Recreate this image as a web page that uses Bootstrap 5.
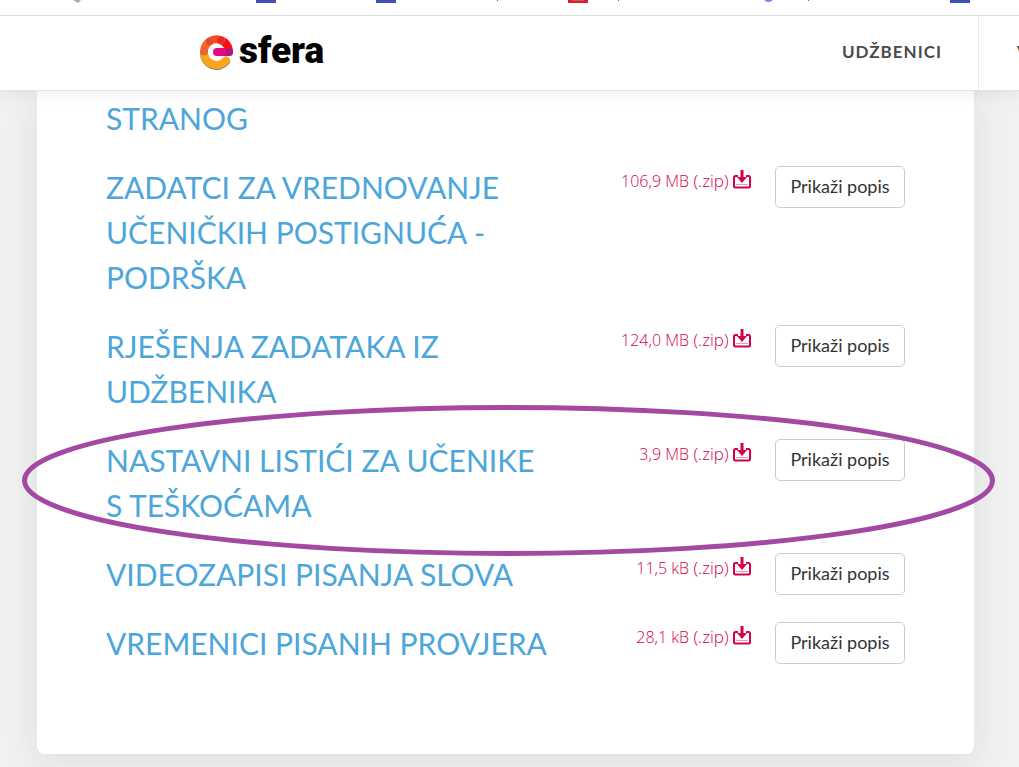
<!DOCTYPE html>
<html lang="hr">
<head>
<meta charset="utf-8">
<meta name="viewport" content="width=device-width, initial-scale=1">
<title>e-sfera</title>
<link href="https://cdn.jsdelivr.net/npm/bootstrap@5.3.0/dist/css/bootstrap.min.css" rel="stylesheet">
<style>
body { background: #f1f1f1; font-family: Lato, "Open Sans", sans-serif; overflow-x: hidden; }
.bookmarks { height: 16px; background: #fff; border-bottom: 1px solid #dadcdd; z-index: 3; }
.bookmarks svg { display: block; }
.site-header { height: 75px; background: #fff; border-bottom: 1px solid #e4e4e4; box-shadow: 0 2px 16px rgba(0,0,0,.08); z-index: 2; }
.brand { margin-left: 199px; padding-bottom: 2px; color: #000; font: 900 37px/40px Roboto, sans-serif; }
.brand:hover { color: #000; }
.brand span { padding-bottom: 2px; }
.main-nav { overflow: hidden; width: 215px; }
.main-nav a { font-size: 17px; font-weight: 700; letter-spacing: 1px; color: #4a4a4a; padding: 0 36px 2px 38px; }
.main-nav li + li { border-left: 1px solid #ebebeb; }
.main-nav li + li a { padding-left: 38px; }
.sheet { margin: 0 45px 13px 37px; padding: 5px 69px 88px; background: #fff; border-radius: 0 0 8px 8px; box-shadow: 0 8px 36px rgba(20,30,45,.09); }
.materials { gap: 24px; }
.material-title { font-size: 30px; line-height: 45px; font-weight: 400; color: #4ca6da; }
.download { color: #d50045; font: 300 17px/24px "Open Sans", sans-serif; margin-top: 4px; }
.download:hover { color: #a80036; }
.download svg { vertical-align: -2px; }
.file-size { font-size: 16px; }
.btn-list { width: 130px; height: 42px; margin-top: 1px; border: 1px solid #ccc; border-radius: 5px; background: #fff; color: #333; font-size: 18px; line-height: 24px; padding: 0 0 2px; }
.highlight { left: -84px; top: -33px; width: calc(100% + 174px); max-width: none; height: 151px; overflow: visible; pointer-events: none; }
</style>
</head>
<body>
<div class="bookmarks overflow-hidden position-relative" aria-hidden="true">
  <svg width="1019" height="15">
    <path d="M73 0h8l-3 3z" fill="#aaa"/>
    <path d="M256 0h20v3h-20zM376 0h20v3h-20zM950 0h20v3h-20z" fill="#4250b5"/>
    <path d="M568 0h20v3h-20z" fill="#d81e30"/><path d="M572 0h12v1h-12z" fill="#c45a60"/>
    <path d="M764 0h9l-3 2h-3z" fill="#8486ed"/>
    <path d="M497 0h1v1h-1zM618 0h1v1h-1zM808 0h1v1h-1z" fill="#85614d"/>
  </svg>
</div>
<header class="site-header d-flex align-items-center justify-content-between position-relative">
  <a class="brand d-flex align-items-center text-decoration-none" href="#">
    <svg width="36" height="36" viewBox="0 0 36 36" class="me-1" aria-hidden="true">
      <g fill="none" stroke-width="8" stroke-linecap="round">
        <path d="M5 18A12.500 12.500 0 0 0 27 26.500" stroke="#8f7a5c" transform="translate(0 1)"/>
        <path d="M5 18A12.500 12.500 0 0 0 27 26.500" stroke="#faa61d"/>
        <path d="M22.500 6.500A12.500 12.500 0 0 1 29.800 15.500" stroke="#fd1014"/>
        <path d="M10.500 7.500A12.500 12.500 0 0 1 22 6.300" stroke="#fb4827"/>
        <path d="M5 17.500A12.500 12.500 0 0 1 10.500 7.500" stroke="#fb632d"/>
      </g>
      <circle cx="10.500" cy="7.500" r="3.600" fill="#dc4a30"/><circle cx="22" cy="6.300" r="3.600" fill="#e42c24"/><circle cx="5" cy="17.500" r="3.600" fill="#df6932"/>
      <rect x="14" y="14" width="20" height="8" rx="4" fill="#e5087e"/><path d="M27 14h3a4 4 0 0 1 0 8h-3z" fill="#b61576"/>
    </svg>
    <span>sfera</span>
  </a>
  <nav class="main-nav align-self-stretch">
    <ul class="list-unstyled d-flex h-100 m-0">
      <li class="d-flex align-items-center"><a class="text-decoration-none" href="#">UDŽBENICI</a></li>
      <li class="d-flex align-items-center"><a class="text-decoration-none" href="#">V</a></li>
    </ul>
  </nav>
</header>
<svg class="d-none" aria-hidden="true">
  <symbol id="dl" viewBox="0 0 18 19">
    <path d="M5 6H2.500Q1 6 1 7.500V16Q1 17.500 2.500 17.500H15.500Q17 17.500 17 16V7.500Q17 6 15.500 6H13" fill="none" stroke="currentColor" stroke-width="2"/>
    <path d="M7.500 0h3v7h3.500L9 13 4 7h3.500z" fill="currentColor"/><path d="M3 14.500h12" stroke="currentColor" stroke-opacity=".4"/>
  </symbol>
</svg>
<main class="sheet">
  <div class="materials d-flex flex-column">
    <div class="row g-0">
      <h2 class="material-title col-7 m-0 pe-2">STRANOG</h2>
    </div>
    <div class="row g-0">
      <h2 class="material-title col-7 m-0 pe-2">ZADATCI ZA VREDNOVANJE UČENIČKIH POSTIGNUĆA - PODRŠKA</h2>
      <div class="col-5 d-flex justify-content-end align-items-start gap-4">
        <a class="download text-decoration-none text-nowrap" href="#"><span class="file-size">106,9 MB</span> (.zip) <svg width="18" height="19"><use href="#dl"/></svg></a>
        <button class="btn btn-list" type="button">Prikaži popis</button>
      </div>
    </div>
    <div class="row g-0">
      <h2 class="material-title col-7 m-0 pe-2">RJEŠENJA ZADATAKA IZ UDŽBENIKA</h2>
      <div class="col-5 d-flex justify-content-end align-items-start gap-4">
        <a class="download text-decoration-none text-nowrap" href="#"><span class="file-size">124,0 MB</span> (.zip) <svg width="18" height="19"><use href="#dl"/></svg></a>
        <button class="btn btn-list" type="button">Prikaži popis</button>
      </div>
    </div>
    <div class="row g-0 position-relative">
      <h2 class="material-title col-7 m-0 pe-2">NASTAVNI LISTIĆI ZA UČENIKE S&nbsp;TEŠKOĆAMA</h2>
      <div class="col-5 d-flex justify-content-end align-items-start gap-4">
        <a class="download text-decoration-none text-nowrap" href="#"><span class="file-size">3,9 MB</span> (.zip) <svg width="18" height="19"><use href="#dl"/></svg></a>
        <button class="btn btn-list" type="button">Prikaži popis</button>
      </div>
      <svg class="highlight position-absolute p-0 m-0" viewBox="0 0 973 151" preserveAspectRatio="none" aria-hidden="true"><ellipse cx="486.500" cy="75.500" rx="484" ry="73" fill="none" stroke="#a349a4" stroke-width="5" vector-effect="non-scaling-stroke"/></svg>
    </div>
    <div class="row g-0">
      <h2 class="material-title col-7 m-0 pe-2">VIDEOZAPISI PISANJA SLOVA</h2>
      <div class="col-5 d-flex justify-content-end align-items-start gap-4">
        <a class="download text-decoration-none text-nowrap" href="#"><span class="file-size">11,5 kB</span> (.zip) <svg width="18" height="19"><use href="#dl"/></svg></a>
        <button class="btn btn-list" type="button">Prikaži popis</button>
      </div>
    </div>
    <div class="row g-0">
      <h2 class="material-title col-7 m-0 pe-2">VREMENICI PISANIH PROVJERA</h2>
      <div class="col-5 d-flex justify-content-end align-items-start gap-4">
        <a class="download text-decoration-none text-nowrap" href="#"><span class="file-size">28,1 kB</span> (.zip) <svg width="18" height="19"><use href="#dl"/></svg></a>
        <button class="btn btn-list" type="button">Prikaži popis</button>
      </div>
    </div>
  </div>
</main>
<script src="https://cdn.jsdelivr.net/npm/bootstrap@5.3.0/dist/js/bootstrap.bundle.min.js"></script>
</body>
</html>
